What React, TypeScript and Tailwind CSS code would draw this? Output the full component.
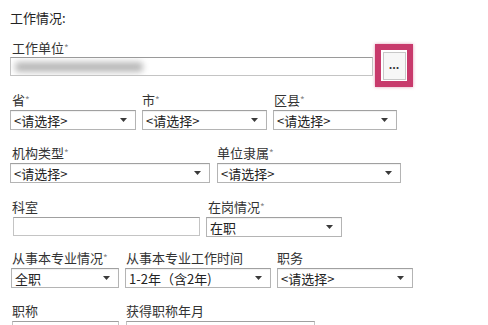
import React from "react";

const font = { fontFamily: '"Noto Sans CJK SC", "Noto Sans", sans-serif' };

function Arrow() {
  return (
    <svg width="7" height="4" viewBox="0 0 7 4" className="absolute right-[8px] top-1/2 -translate-y-1/2">
      <path d="M0 0 L7 0 L3.5 4 Z" fill="#3a3a3a" />
    </svg>
  );
}

function Select({ w, value, cls = "" }: { w: string; value: string; cls?: string }) {
  return (
    <div
      className={`relative h-[20px] border border-[#b4b4b4] border-t-[#a0a0a0] bg-white flex items-center pl-[3px] text-[13px] leading-none text-[#222] shadow-[inset_0_1px_1px_rgba(0,0,0,0.06)] ${w} ${cls}`}
    >
      <span>{value}</span>
      <Arrow />
    </div>
  );
}

function Label({ text, star = false, cls = "" }: { text: string; star?: boolean; cls?: string }) {
  return (
    <div className={`h-[16px] text-[13px] leading-[16px] text-[#333] whitespace-nowrap ${cls}`}>
      {text}
      {star && <span className="text-[10px] text-[#888] align-top">*</span>}
    </div>
  );
}

export default function App() {
  return (
    <div className="w-[488px] h-[325px] bg-white overflow-hidden pl-[10px] pt-[10px]" style={font}>
      <div className="h-[16px] text-[13px] leading-[16px] text-[#222]">工作情况:</div>

      {/* 工作单位 */}
      <div className="flex items-start mt-[14px]">
        <div className="flex flex-col">
          <Label text="工作单位" star cls="ml-[2px]" />
          <div className="relative mt-[1px] w-[363px] h-[19px] border border-[#c4c4c4] border-t-[#9a9a9a] bg-white overflow-hidden">
            <div className="absolute left-[4px] top-[4px] w-[128px] h-[10px] bg-[#b9b9b9] blur-[3px] rounded-sm" />
          </div>
        </div>
        <div className="ml-[2px] mt-[4px] w-[38px] h-[43px] border-[6px] border-[#c83a6c] bg-white flex items-center justify-center shadow-[0_0_3px_rgba(200,58,108,0.5)]">
          <div className="w-[23px] h-[28px] border border-[#c8c8c8] bg-[#f7f7f7] flex items-center justify-center text-[11px] font-bold leading-none text-[#333] pb-[3px]">
            ...
          </div>
        </div>
      </div>

      {/* 省 市 区县 */}
      <div className="flex mt-[5px]">
        <div className="flex flex-col w-[126px]">
          <Label text="省" star cls="ml-[2px]" />
          <Select w="w-[126px]" value="<请选择>" cls="mt-[2px]" />
        </div>
        <div className="flex flex-col w-[125px] ml-[6px]">
          <Label text="市" star />
          <Select w="w-[125px]" value="<请选择>" cls="mt-[2px]" />
        </div>
        <div className="flex flex-col w-[124px] ml-[6px]">
          <Label text="区县" star cls="ml-[1px]" />
          <Select w="w-[124px]" value="<请选择>" cls="mt-[2px]" />
        </div>
      </div>

      {/* 机构类型 单位隶属 */}
      <div className="flex mt-[15px]">
        <div className="flex flex-col w-[200px]">
          <Label text="机构类型" star cls="ml-[2px]" />
          <Select w="w-[200px]" value="<请选择>" cls="mt-[2px]" />
        </div>
        <div className="flex flex-col w-[184px] ml-[7px]">
          <Label text="单位隶属" star />
          <Select w="w-[184px]" value="<请选择>" cls="mt-[2px]" />
        </div>
      </div>

      {/* 科室 在岗情况 */}
      <div className="flex mt-[16px]">
        <div className="flex flex-col w-[187px] ml-[3px]">
          <Label text="科室" cls="-ml-[1px]" />
          <div className="mt-[2px] w-[187px] h-[19px] border border-[#c4c4c4] border-t-[#a0a0a0] bg-white" />
        </div>
        <div className="flex flex-col w-[136px] ml-[6px]">
          <Label text="在岗情况" star cls="ml-[2px]" />
          <Select w="w-[136px]" value="在职" cls="mt-[2px]" />
        </div>
      </div>

      {/* 从事本专业情况 ... */}
      <div className="flex mt-[13px]">
        <div className="flex flex-col w-[108px] ml-[1px]">
          <Label text="从事本专业情况" star cls="ml-[1px]" />
          <Select w="w-[108px]" value="全职" cls="mt-[2px]" />
        </div>
        <div className="flex flex-col w-[146px] ml-[6px]">
          <Label text="从事本专业工作时间" cls="ml-[1px]" />
          <Select w="w-[146px]" value="1-2年（含2年)" cls="mt-[2px]" />
        </div>
        <div className="flex flex-col w-[136px] ml-[6px]">
          <Label text="职务" />
          <Select w="w-[136px]" value="<请选择>" cls="mt-[2px]" />
        </div>
      </div>

      {/* 职称 获得职称年月 */}
      <div className="flex mt-[15px]">
        <div className="flex flex-col w-[107px] ml-[2px]">
          <Label text="职称" />
          <div className="mt-[2px] w-[107px] h-[19px] border border-[#c4c4c4] border-t-[#a0a0a0] bg-white" />
        </div>
        <div className="flex flex-col w-[189px] ml-[7px]">
          <Label text="获得职称年月" />
          <div className="mt-[2px] w-[189px] h-[19px] border border-[#c4c4c4] border-t-[#a0a0a0] bg-white" />
        </div>
      </div>
    </div>
  );
}
